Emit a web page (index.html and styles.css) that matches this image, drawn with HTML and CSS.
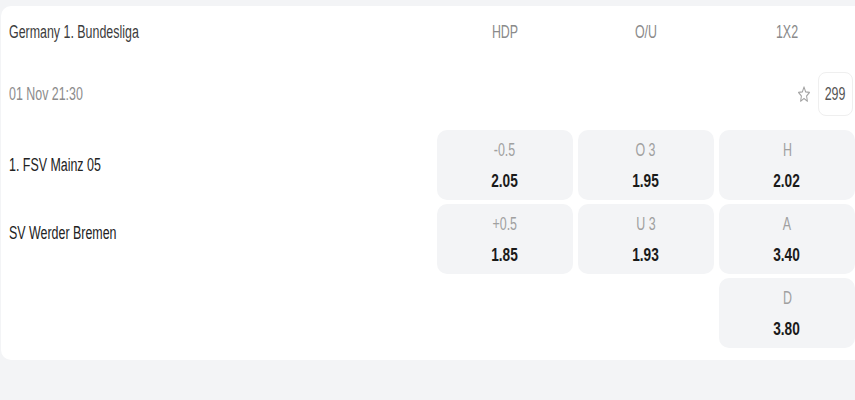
FILE: index.html
```html
<!DOCTYPE html>
<html lang="en">
<head>
<meta charset="utf-8">
<title>Match odds</title>
<link rel="stylesheet" href="styles.css">
</head>
<body>
<div class="card">
  <div class="head">
    <div class="league"><span class="sq-left">Germany 1. Bundesliga</span></div>
    <div class="market"><span class="sq">HDP</span></div>
    <div class="market"><span class="sq">O/U</span></div>
    <div class="market"><span class="sq">1X2</span></div>
  </div>
  <div class="meta">
    <div class="date"><span class="sq-left">01 Nov 21:30</span></div>
    <div class="actions">
      <svg class="star" width="14" height="19" viewBox="0 0 24 24" preserveAspectRatio="none" aria-hidden="true">
        <path d="M12 2.5l2.8 6.2 6.6.7-5 4.5 1.4 6.6L12 17.1l-5.8 3.4 1.4-6.6-5-4.5 6.6-.7z" fill="none" stroke="#a3a3a3" stroke-width="1.7" stroke-linejoin="round"/>
      </svg>
      <div class="count"><span class="sq">299</span></div>
    </div>
  </div>
  <div class="body">
    <div class="teams">
      <div class="team first"><span class="sq-left">1. FSV Mainz 05</span></div>
      <div class="team"><span class="sq-left">SV Werder Bremen</span></div>
    </div>
    <div class="odds-col">
      <div class="cell"><span class="lbl sq">-0.5</span><span class="val sq">2.05</span></div>
      <div class="cell"><span class="lbl sq">+0.5</span><span class="val sq">1.85</span></div>
    </div>
    <div class="odds-col">
      <div class="cell"><span class="lbl sq">O 3</span><span class="val sq">1.95</span></div>
      <div class="cell"><span class="lbl sq">U 3</span><span class="val sq">1.93</span></div>
    </div>
    <div class="odds-col">
      <div class="cell"><span class="lbl sq">H</span><span class="val sq">2.02</span></div>
      <div class="cell"><span class="lbl sq">A</span><span class="val sq">3.40</span></div>
      <div class="cell"><span class="lbl sq">D</span><span class="val sq">3.80</span></div>
    </div>
  </div>
</div>
</body>
</html>
```

FILE: styles.css
```css
html, body {
  margin: 0;
  padding: 0;
}
body {
  background: #f3f4f6;
  padding: 6px 0 0 1px;
  overflow: hidden;
  height: 394px;
  font-family: "Liberation Sans", Arial, sans-serif;
}
.sq,
.sq-left {
  display: inline-block;
  transform: scaleX(0.69);
  white-space: nowrap;
}
.sq {
  transform-origin: center;
}
.sq-left {
  transform-origin: left center;
}
.card {
  background: #ffffff;
  border-radius: 10px;
  width: 880px;
  height: 354px;
  padding-left: 8px;
  box-sizing: border-box;
}
.head, .body {
  display: grid;
  grid-template-columns: 423px 136px 136px 136px;
  column-gap: 5px;
}
.head {
  height: 52px;
  align-items: center;
}
.league {
  font-size: 18px;
  color: #3c3c3c;
}
.market {
  text-align: center;
  font-size: 18px;
  color: #8a8a8a;
}
.meta {
  width: 844px;
  height: 72px;
  display: flex;
  align-items: center;
  justify-content: space-between;
}
.date {
  font-size: 18px;
  color: #8c8c8c;
}
.actions {
  display: flex;
  align-items: center;
  gap: 7px;
}
.star {
  display: block;
}
.count {
  width: 35px;
  height: 44px;
  box-sizing: border-box;
  border: 1px solid #efefef;
  border-radius: 8px;
  display: flex;
  align-items: center;
  justify-content: center;
  font-size: 18px;
  color: #555;
}
.teams {
  display: flex;
  flex-direction: column;
  padding-top: 25px;
}
.team {
  font-size: 18px;
  line-height: 20px;
  color: #222;
}
.team.first {
  margin-bottom: 48px;
}
.odds-col {
  display: flex;
  flex-direction: column;
  gap: 4px;
}
.cell {
  height: 70px;
  box-sizing: border-box;
  background: #f3f4f6;
  border-radius: 10px;
  display: flex;
  flex-direction: column;
  align-items: center;
  padding-top: 10px;
}
.lbl {
  font-size: 18px;
  line-height: 20px;
  color: #a0a0a0;
}
.val {
  margin-top: 10px;
  font-size: 18px;
  line-height: 22px;
  font-weight: 700;
  color: #1a1a1a;
}
.val.sq {
  transform: scaleX(0.76);
}
```
